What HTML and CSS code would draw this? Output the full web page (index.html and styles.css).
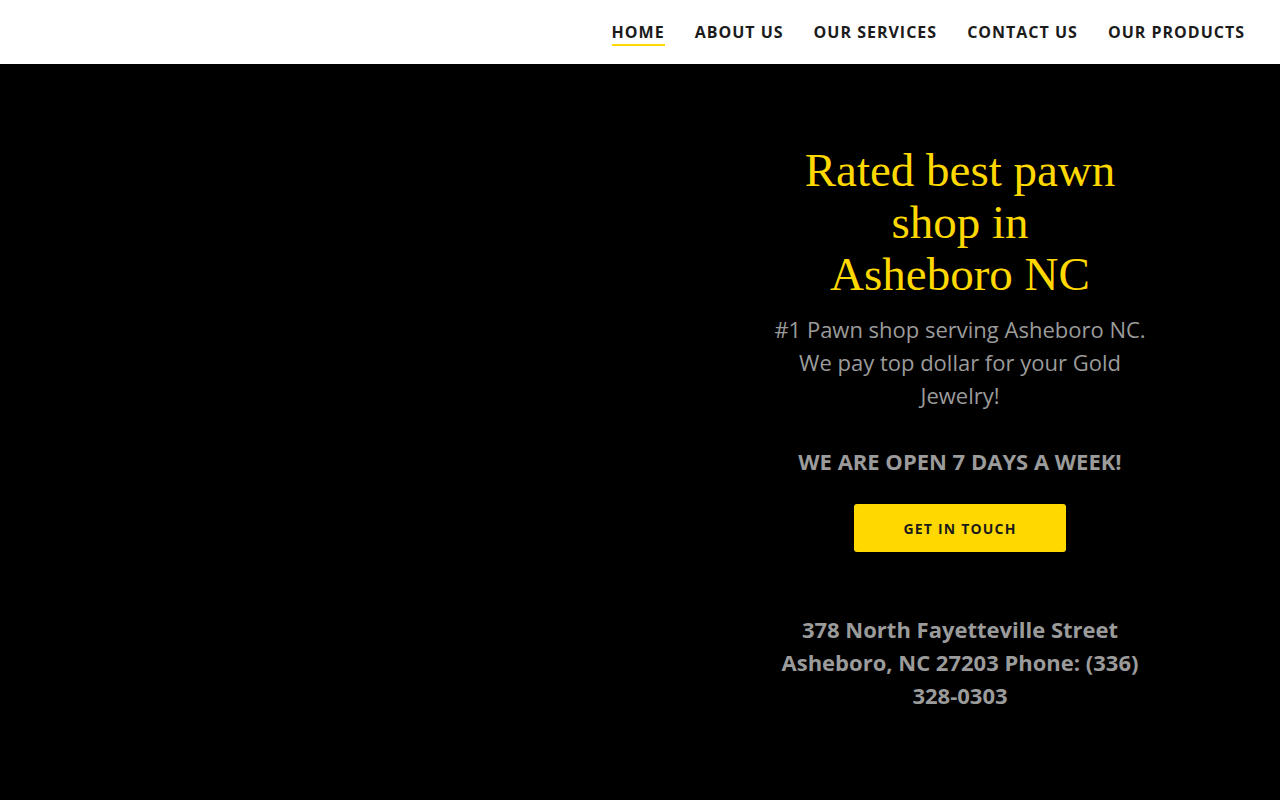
FILE: index.html
```html
<!DOCTYPE html>
<html lang="en">
<head>
    <meta charset="UTF-8">
    <meta name="viewport" content="width=device-width, initial-scale=1.0">
    <title>Asheboro Pawn Shop</title>
    <link rel="stylesheet" href="styles.css">
</head>
<body>
    <header class="site-header">
        <nav class="main-nav">
            <a href="#" class="nav-link active">HOME</a>
            <a href="#" class="nav-link">ABOUT US</a>
            <a href="#" class="nav-link">OUR SERVICES</a>
            <a href="#" class="nav-link">CONTACT US</a>
            <a href="#" class="nav-link">OUR PRODUCTS</a>
        </nav>
    </header>

    <section class="hero">
        <div class="hero-media"></div>
        <div class="hero-content">
            <h1>Rated best pawn<br>shop in<br>Asheboro NC</h1>
            <p class="hero-text">#1 Pawn shop serving Asheboro NC. We pay top dollar for your Gold Jewelry!<br><br><strong>WE ARE OPEN 7 DAYS A WEEK!</strong></p>
            <a href="#" class="cta">GET IN TOUCH</a>
            <p class="address">378 North Fayetteville Street Asheboro, NC 27203 Phone: (336) 328-0303</p>
        </div>
    </section>
</body>
</html>
```

FILE: styles.css
```css
body {
    margin: 0;
    font-family: 'Open Sans', sans-serif;
    background-color: #000;
    overflow: hidden;
}

.site-header {
    height: 64px;
    background-color: #fff;
    display: flex;
    justify-content: flex-end;
    align-items: center;
    padding-right: 35px;
}

.main-nav {
    display: flex;
    gap: 30px;
}

.nav-link {
    font-size: 16px;
    font-weight: 700;
    letter-spacing: 1px;
    color: #1b1b1b;
    text-decoration: none;
    padding-top: 3px;
    padding-bottom: 1px;
    border-bottom: 2px solid transparent;
}

.nav-link.active {
    border-bottom-color: #ffd800;
}

.hero {
    display: flex;
    min-height: 736px;
}

.hero-media {
    flex: 1;
}

.hero-content {
    flex: 1;
    display: flex;
    flex-direction: column;
    align-items: center;
    text-align: center;
    padding-top: 80px;
}

.hero-content h1 {
    margin: 0 0 13px;
    font-family: 'Liberation Serif', 'DejaVu Serif', serif;
    font-weight: 400;
    font-size: 47px;
    line-height: 52px;
    color: #ffd800;
}

.hero-text,
.address {
    width: 384px;
    margin: 0;
    font-size: 22px;
    line-height: 33px;
    color: #9b9b9b;
}

.cta {
    margin-top: 26px;
    width: 212px;
    height: 48px;
    display: flex;
    justify-content: center;
    align-items: center;
    background-color: #ffd800;
    border-radius: 3px;
    color: #1b1b1b;
    font-size: 14px;
    font-weight: 700;
    letter-spacing: 1.2px;
    text-decoration: none;
}

.address {
    margin-top: 61px;
    font-weight: 700;
}
```
